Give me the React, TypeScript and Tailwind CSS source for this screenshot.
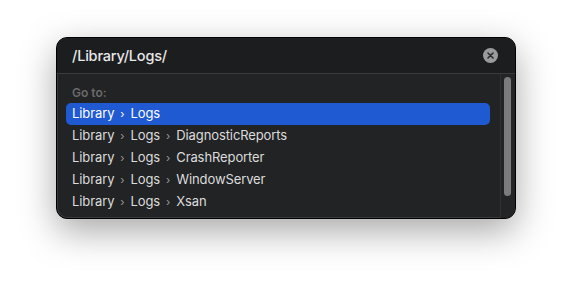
import React from 'react';

const rows: string[][] = [
  ['Library', 'Logs'],
  ['Library', 'Logs', 'DiagnosticReports'],
  ['Library', 'Logs', 'CrashReporter'],
  ['Library', 'Logs', 'WindowServer'],
  ['Library', 'Logs', 'Xsan'],
];

const Path: React.FC<{ parts: string[]; active?: boolean }> = ({ parts, active }) => (
  <div
    className={`h-[22px] flex items-center px-[6px] rounded-[5px] text-[13px] tracking-[-0.1px] ${
      active ? 'bg-[#1f5ad2] text-white' : 'text-[#dcdcdc]'
    }`}
  >
    {parts.map((p, i) => (
      <React.Fragment key={i}>
        {i > 0 && (
          <span className={`mx-[6px] text-[11px] ${active ? 'text-white' : 'text-[#9a9a9a]'}`}>›</span>
        )}
        <span>{p}</span>
      </React.Fragment>
    ))}
  </div>
);

export default function App() {
  return (
    <div
      className="w-[572px] h-[292px] bg-white pl-[56px] pt-[37px]"
      style={{ fontFamily: 'Inter, "Noto Sans", sans-serif' }}
    >
      <div className="w-[460px] h-[182px] rounded-[11px] border border-black bg-[#222325] overflow-hidden flex flex-col shadow-[0_12px_36px_rgba(0,0,0,0.35),inset_0_0_0_1px_rgba(255,255,255,0.1)]">
        {/* Search field */}
        <div className="h-[36px] shrink-0 flex items-center pl-[15px] pr-[17px] bg-[#1c1d1f] border-b border-[#3a3b3d]">
          <span className="flex-1 text-[14.5px] font-medium tracking-[-0.2px] text-[#e8e8e8]">/Library/Logs/</span>
          <div className="w-[15px] h-[15px] rounded-full bg-[#9b9b9b] flex items-center justify-center">
            <svg width="7" height="7" viewBox="0 0 7 7">
              <path d="M1 1L6 6M6 1L1 6" stroke="#2a2a2a" strokeWidth="1.6" strokeLinecap="round" />
            </svg>
          </div>
        </div>

        <div className="flex-1 flex">
          <div className="flex-1 pl-[9px] pr-[10px] pt-[8px]">
            <div className="h-[21px] flex items-center px-[6px] text-[12px] font-semibold text-[#6a6a6a]">
              Go to:
            </div>
            {rows.map((r, i) => (
              <Path key={i} parts={r} active={i === 0} />
            ))}
          </div>
          <div className="w-[15px] border-l border-[#303133] bg-[#232426] pl-[3px] pt-[3px]">
            <div className="w-[7px] h-[119px] rounded-full bg-[#7b7b7b]" />
          </div>
        </div>
      </div>
    </div>
  );
}
